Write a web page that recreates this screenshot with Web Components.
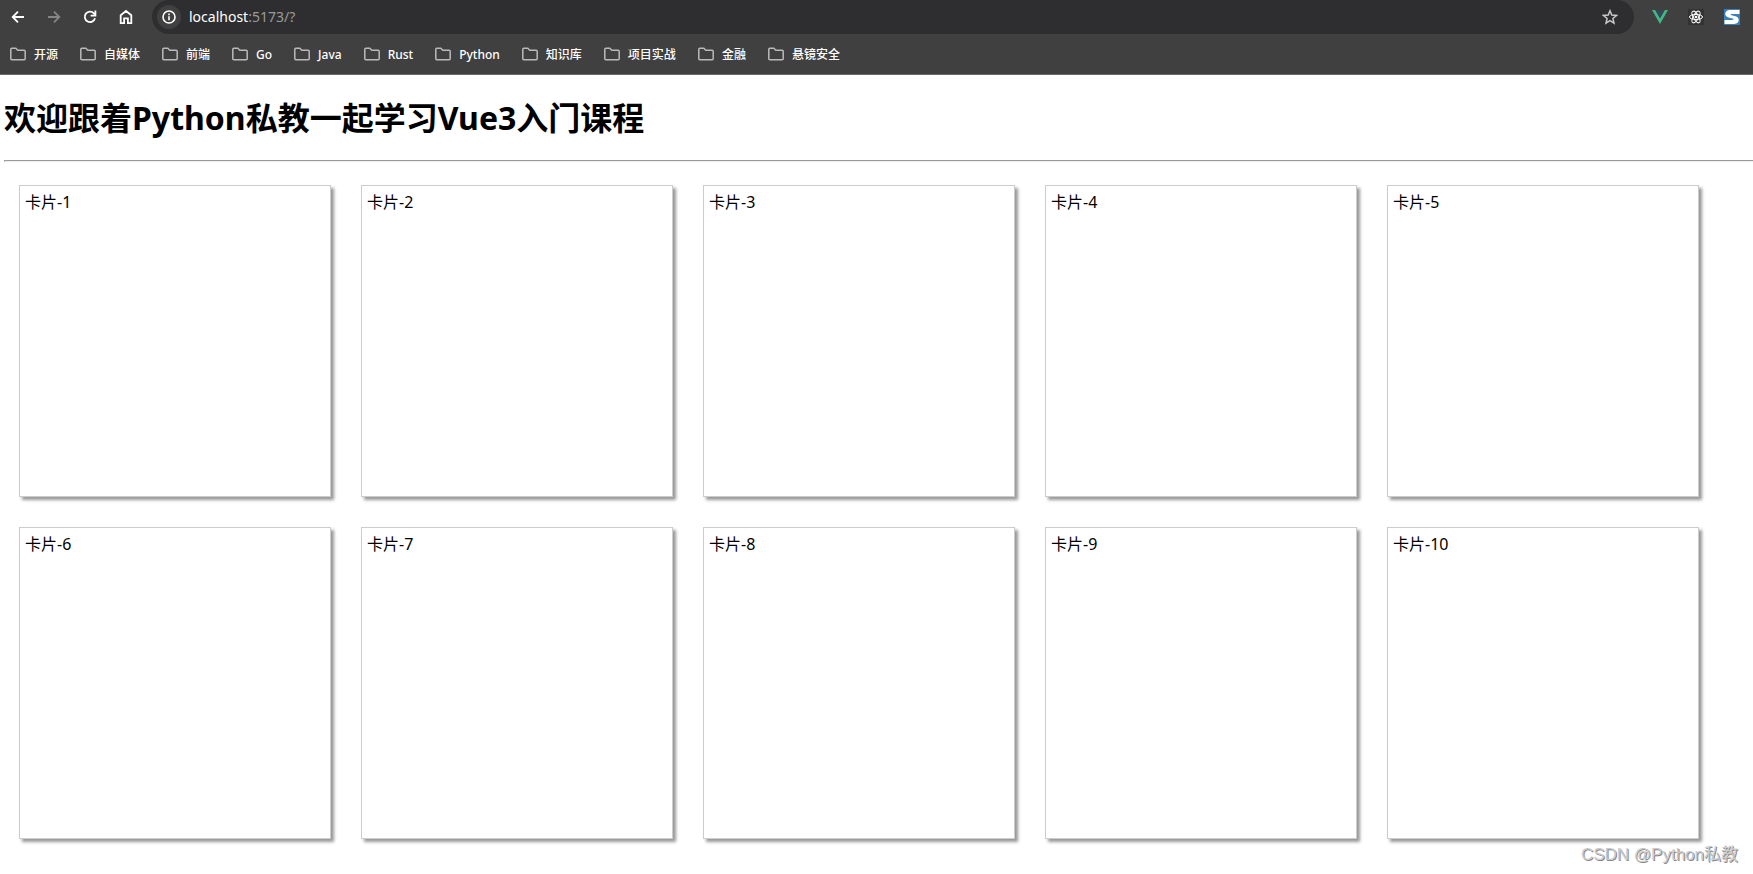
<!DOCTYPE html>
<html lang="zh-CN">
<head>
<meta charset="utf-8">
<title>Vue3</title>
<style>
html, body { margin: 0; background: #fff; }
body { font-family: "Noto Sans", "Noto Sans CJK SC", sans-serif; color: #000; }
</style>
</head>
<body>
<browser-window>
  <browser-toolbar slot="chrome"></browser-toolbar>
  <bookmark-bar slot="chrome">
    <bookmark-folder>开源</bookmark-folder>
    <bookmark-folder>自媒体</bookmark-folder>
    <bookmark-folder>前端</bookmark-folder>
    <bookmark-folder>Go</bookmark-folder>
    <bookmark-folder>Java</bookmark-folder>
    <bookmark-folder>Rust</bookmark-folder>
    <bookmark-folder>Python</bookmark-folder>
    <bookmark-folder>知识库</bookmark-folder>
    <bookmark-folder>项目实战</bookmark-folder>
    <bookmark-folder>金融</bookmark-folder>
    <bookmark-folder>悬镜安全</bookmark-folder>
  </bookmark-bar>
  <course-page>
    <span slot="title">欢迎跟着Python私教一起学习Vue3入门课程</span>
    <course-card>卡片-1</course-card>
    <course-card>卡片-2</course-card>
    <course-card>卡片-3</course-card>
    <course-card>卡片-4</course-card>
    <course-card>卡片-5</course-card>
    <course-card>卡片-6</course-card>
    <course-card>卡片-7</course-card>
    <course-card>卡片-8</course-card>
    <course-card>卡片-9</course-card>
    <course-card>卡片-10</course-card>
  </course-page>
  <water-mark slot="overlay">CSDN @Python私教</water-mark>
</browser-window>
<script>
const define = (name, html) => customElements.define(name, class extends HTMLElement {
  constructor() {
    super();
    const t = document.createElement('template');
    t.innerHTML = html;
    this.attachShadow({ mode: 'open' }).append(t.content.cloneNode(true));
  }
});

define('browser-window', `
<style>
:host { display: block; position: relative; min-height: 100vh; }
header { background: #404040; border-bottom: 1px solid #6b6b6b; }
</style>
<header><slot name="chrome"></slot></header>
<main><slot></slot></main>
<slot name="overlay"></slot>`);

define('browser-toolbar', `
<style>
:host { display: flex; align-items: center; height: 34px; padding-right: 13px; color: #fff; }
nav { display: flex; gap: 20px; padding: 0 18px 0 10px; }
button { all: unset; display: flex; align-items: center; justify-content: center; width: 16px; height: 16px; }
button:disabled { color: #858585; }
svg { display: block; }
form { flex: 1; display: flex; align-items: center; height: 34px; margin: 0; border-radius: 17px; background: #2e2e30; padding: 0 16px 0 5px; }
.info { width: 24px; height: 24px; border-radius: 12px; background: #404040; }
.address { flex: 1; margin-left: 8px; font-size: 14px; line-height: 20px; }
.rest { color: #9a9a9b; }
.star { color: #c7c7c7; }
.ext { display: flex; gap: 20px; padding-left: 18px; }
</style>
<nav>
  <button aria-label="Back"><svg width="16" height="16" viewBox="0 0 16 16" fill="none" stroke="currentColor" stroke-width="1.8"><path d="M14 8H3M8 2.7 2.7 8 8 13.3"/></svg></button>
  <button aria-label="Forward" disabled><svg width="16" height="16" viewBox="0 0 16 16" fill="none" stroke="currentColor" stroke-width="1.8"><path d="M2 8h11M8 2.7 13.3 8 8 13.3"/></svg></button>
  <button aria-label="Reload"><svg width="16" height="16" viewBox="0 0 16 16" fill="none" stroke="currentColor" stroke-width="1.8"><path d="M13 9.2A5.2 5.2 0 1 1 11.9 4.4L13.2 6"/><path d="M13.4 1.6v5H8.6"/></svg></button>
  <button aria-label="Home"><svg width="16" height="16" viewBox="0 0 16 16" fill="none" stroke="currentColor" stroke-width="1.8"><path d="M2.7 6.2 8 2l5.3 4.2v8H9.9V9.3H6.100v4.900H2.700z"/></svg></button>
</nav>
<form onsubmit="return false">
  <button type="button" class="info" aria-label="Site information"><svg width="16" height="16" viewBox="0 0 16 16" fill="none" stroke="currentColor" stroke-width="1.6"><circle cx="8" cy="8" r="6"/><path d="M8 7.200v4M8 4.600v1.600"/></svg></button>
  <div class="address" role="textbox" contenteditable="true" aria-label="Address"><span>localhost</span><span class="rest">:5173/?</span></div>
  <button type="button" class="star" aria-label="Bookmark"><svg width="16" height="16" viewBox="0 0 16 16" fill="none" stroke="currentColor" stroke-width="1.5"><path d="m8 1.800 1.800 4.300 4.700.400-3.600 3 1.100 4.600L8 11.700l-4 2.400 1.100-4.600-3.600-3 4.700-.4z"/></svg></button>
</form>
<div class="ext">
  <button aria-label="Vue"><svg width="16" height="16" viewBox="0 0 16 16"><path fill="#41b883" d="M0 1h3.200L8 9.300 12.800 1H16L8 15z"/><path fill="#34495e" d="M3.200 1h3L8 4.200 9.800 1h3L8 9.300z"/></svg></button>
  <button aria-label="React"><svg width="16" height="16" viewBox="0 0 16 16"><path fill="#333" d="M0 0h16v16H0z"/><g fill="none" stroke="#fff"><ellipse cx="8" cy="8" rx="6.500" ry="2.600"/><ellipse cx="8" cy="8" rx="6.500" ry="2.600" transform="rotate(60 8 8)"/><ellipse cx="8" cy="8" rx="6.500" ry="2.600" transform="rotate(120 8 8)"/></g><circle cx="8" cy="8" r="1.300" fill="#fff"/></svg></button>
  <button aria-label="S"><svg width="16" height="16" viewBox="0 0 16 16"><path fill="#3a80bd" d="M0 0h16v16H0z"/><path fill="#fff" d="M15.500 1v4H8C6.200 5 6.200 6 7.500 6.300l4 .9c4.500 1 4.500 7.800-1.500 7.800H.5v-4H8c2 0 2-1 .7-1.400L4.500 8.500C-.5 7.200.5 1 6 1z"/></svg></button>
</div>`);

define('bookmark-bar', `
<style>
:host { display: flex; align-items: center; gap: 22px; height: 40px; padding-left: 10px; color: #fff; }
</style>
<slot></slot>`);

define('bookmark-folder', `
<style>
:host { display: block; }
button { all: unset; display: flex; align-items: center; gap: 8px; font-size: 12px; line-height: 16px; font-weight: 500; white-space: nowrap; }
span { padding-top: 2px; }
</style>
<button><svg width="16" height="16" viewBox="0 0 16 16" fill="none" stroke="#bababa" stroke-width="1.5"><path d="M.8 12.700V3.300q0-1 1-1h4l2 2h6.400q1 0 1 1v7.400q0 1-1 1H1.800q-1 0-1-1z"/></svg><span><slot></slot></span></button>`);

define('course-page', `
<style>
:host { display: block; padding-left: 4px; }
h1 { margin: 0; padding: 22px 0 21px; font-size: 32px; line-height: 42px; font-weight: 700; }
hr { margin: 0; border: solid; border-width: 1px 0 1px 1px; border-color: #9a9a9a #eee #eee #9a9a9a; }
.cards { display: flex; flex-wrap: wrap; gap: 30px; padding: 23px 15px; }
</style>
<h1><slot name="title"></slot></h1>
<hr>
<div class="cards"><slot></slot></div>`);

define('course-card', `
<style>
:host { display: block; box-sizing: border-box; width: 312px; height: 312px; padding: 5px; border: 1px solid #ccc; box-shadow: 3px 3px 3px #999; font-size: 16px; line-height: 22px; }
</style>
<slot></slot>`);

define('water-mark', `
<style>
:host { position: absolute; right: 15px; bottom: 8px; font: 17px/22px "Liberation Sans", "Noto Sans CJK SC", sans-serif; color: #ccc; text-shadow: 1px 1px 0 #888; }
</style>
<slot></slot>`);
</script>
</body>
</html>
